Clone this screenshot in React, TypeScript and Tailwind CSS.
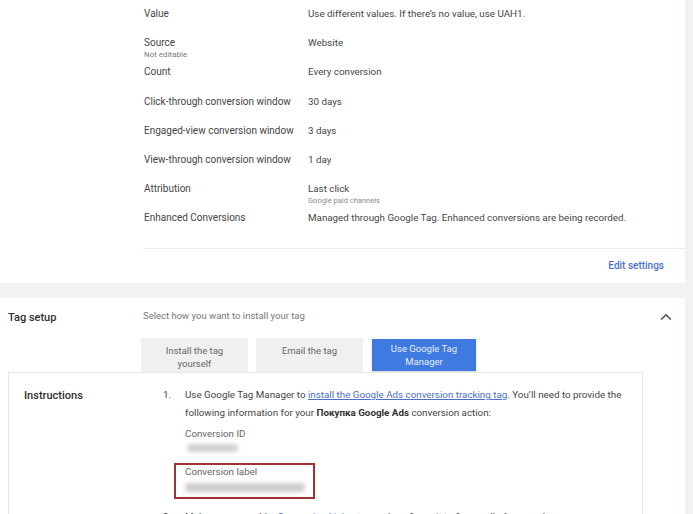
import React from "react";

const rows: { label: string; sub?: string; value: string; vsub?: string }[] = [
  { label: "Value", value: "Use different values. If there’s no value, use UAH1." },
  { label: "Source", sub: "Not editable", value: "Website" },
  { label: "Count", value: "Every conversion" },
  { label: "Click-through conversion window", value: "30 days" },
  { label: "Engaged-view conversion window", value: "3 days" },
  { label: "View-through conversion window", value: "1 day" },
  { label: "Attribution", value: "Last click", vsub: "Google paid channels" },
  {
    label: "Enhanced Conversions",
    value: "Managed through Google Tag. Enhanced conversions are being recorded.",
  },
];

export default function App() {
  return (
    <div
      className="w-[693px] h-[514px] overflow-hidden bg-[#f1f2f3] flex text-[#454545]"
      style={{ fontFamily: "Roboto, 'Noto Sans', Arial, sans-serif" }}
    >
      <div className="w-[685px] flex flex-col">
        {/* Top card */}
        <div className="bg-white h-[283px] flex flex-col shrink-0">
          <div className="pt-[7px] pl-[144px] flex flex-col">
            {rows.map((r) => (
              <div key={r.label} className="h-[29.2px] flex">
                <div className="w-[164px] flex flex-col pt-[1px]">
                  <span className="text-[10px] leading-[12px]">{r.label}</span>
                  {r.sub && (
                    <span className="text-[8px] leading-[12px] text-[#7a7a7a]">{r.sub}</span>
                  )}
                </div>
                <div className="flex flex-col pt-[1px]">
                  <span className="text-[9.8px] leading-[12px]">{r.value}</span>
                  {r.vsub && (
                    <span className="text-[7.5px] leading-[12px] text-[#8a8a8a]">{r.vsub}</span>
                  )}
                </div>
              </div>
            ))}
          </div>
          <div className="mt-[7px] ml-[143px] border-t border-[#ececec]" />
          <div className="h-[34px] flex items-center justify-end pr-[21px]">
            <span className="text-[10px] font-medium text-[#4a6fcf]">Edit settings</span>
          </div>
        </div>

        {/* gap */}
        <div className="h-[15px] shrink-0" />

        {/* Tag setup card */}
        <div className="bg-white flex-1 flex flex-col">
          <div className="flex h-[40px]">
            <div className="w-[143px] pl-[8px] pt-[13px] text-[11px] leading-[13px] font-medium text-[#2f2f2f]">
              Tag setup
            </div>
            <div className="flex-1 pt-[12px] text-[9.5px] leading-[12px] text-[#777]">
              Select how you want to install your tag
            </div>
            <div className="w-[40px] pt-[15px] pl-[15px] leading-none">
              <svg width="12" height="8" viewBox="0 0 12 8" fill="none" className="block">
                <path d="M1 6.5 L6 1.8 L11 6.5" stroke="#555" strokeWidth="1.6" />
              </svg>
            </div>
          </div>
          <div className="flex gap-[8px] pl-[141px] h-[34px]">
            <div className="w-[107px] h-[34px] bg-[#f0f0f0] flex items-center justify-center pt-[3px] text-center text-[9.5px] leading-[13px] text-[#666]">
              Install the tag
              <br />
              yourself
            </div>
            <div className="w-[107px] h-[34px] bg-[#f0f0f0] flex items-start pt-[6px] justify-center text-center text-[9.5px] leading-[13px] text-[#666]">
              Email the tag
            </div>
            <div className="ml-[1px] mt-[1px] w-[104px] h-[32px] bg-[#3f7ae0] flex items-center justify-center text-center text-[9.5px] leading-[13px] text-[#e6eefc] shadow-[0_1px_2px_rgba(0,0,0,0.2)]">
              Use Google Tag
              <br />
              Manager
            </div>
          </div>
          <div className="ml-[8px] w-[635px] flex-1 border border-[#e6e6e6] bg-white flex">
            <div className="w-[154px] pl-[15px] pt-[17px] text-[11px] leading-[12px] font-medium text-[#2f2f2f]">
              Instructions
            </div>
            <div className="flex-1 pt-[13px] text-[9.8px] leading-[18px] text-[#454545]">
              <div className="flex">
                <span className="w-[22px]">1.</span>
                <div className="flex-1 flex flex-col pr-[8px]">
                  <p>
                    Use Google Tag Manager to{" "}
                    <span className="text-[#4b6fc4] underline">
                      install the Google Ads conversion tracking tag
                    </span>
                    . You’ll need to provide the following information for your{" "}
                    <b className="font-bold text-[#333]">Покупка Google Ads</b> conversion action:
                  </p>
                  <span className="mt-[5px] leading-[14px] text-[#666]">Conversion ID</span>
                  <div className="mt-[3px] ml-[2px] w-[51px] h-[8px] bg-[#cfcfcf] blur-[2px] rounded" />
                  <div className="mt-[11px] -ml-[11px] w-[141px] h-[36px] border-2 border-[#a33232] pl-[9px] flex flex-col">
                    <span className="leading-[12px] mt-[1px] text-[#666]">Conversion label</span>
                    <div className="mt-[5px] w-[120px] h-[9px] bg-[#cdcdcd] blur-[2px] rounded" />
                  </div>
                </div>
              </div>
              <div className="flex mt-[9px]">
                <span className="w-[22px]">2.</span>
                <p className="flex-1">
                  Make sure you add a{" "}
                  <span className="text-[#4b6fc4] underline">Conversion Linker tag</span> and configure it to
                  fire on all of your webpages.
                </p>
              </div>
            </div>
          </div>
        </div>
      </div>
    </div>
  );
}
